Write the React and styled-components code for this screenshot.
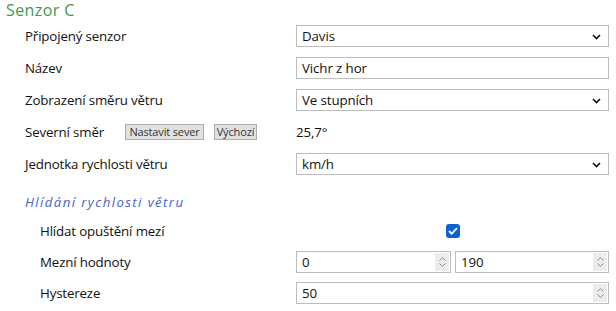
import React from "react";
import styled, { createGlobalStyle } from "styled-components";

const Global = createGlobalStyle`
  html, body { margin: 0; padding: 0; background: #fff; }
  body { font-family: "Open Sans", "Noto Sans", sans-serif; color: #111; }
`;

const Page = styled.div`
  width: 616px;
  height: 311px;
  overflow: hidden;
  box-sizing: border-box;
`;

const Title = styled.h2`
  margin: 0;
  height: 20px;
  padding-left: 6px;
  font-size: 16px;
  line-height: 20px;
  font-weight: 400;
  letter-spacing: 0.4px;
  color: #3f9a4f;
`;

const Row = styled.div`
  display: grid;
  grid-template-columns: ${(p) => (p.$sub ? 256 : 271)}px 313px;
  align-items: center;
  height: ${(p) => p.$h || 32}px;
  padding-left: ${(p) => (p.$sub ? 40 : 25)}px;
`;

const Label = styled.div`
  font-size: 13.3px;
  letter-spacing: -0.15px;
  display: flex;
  align-items: center;
`;

const LabelText = styled.span`
  width: 100px;
`;

const SmallButton = styled.button`
  font-family: inherit;
  font-size: 11px;
  letter-spacing: -0.15px;
  white-space: nowrap;
  height: 16px;
  width: ${(p) => p.$w}px;
  margin-right: 10px;
  padding: 0;
  line-height: 14px;
  background: #e1e1e1;
  border: 1px solid #adadad;
  color: #333;
  border-radius: 0;
`;

const Field = styled.div`
  position: relative;
  height: 22px;
  box-sizing: border-box;
  border: 1px solid #bdbdbd;
  background: #fff;
  display: flex;
  align-items: center;
  padding-left: 5px;
  font-size: 13.3px;
  letter-spacing: -0.1px;
`;

const Chevron = styled.svg`
  position: absolute;
  right: 7px;
  top: 8px;
`;

const Value = styled.div`
  font-size: 13.3px;
  letter-spacing: -0.1px;
`;

const Section = styled.div`
  height: 35px;
  display: flex;
  align-items: center;
  padding-left: 25px;
  padding-top: 8px;
  box-sizing: border-box;
  font-style: italic;
  font-size: 13.2px;
  letter-spacing: 1.4px;
  color: #4563c9;
`;

const CheckCell = styled.div`
  display: flex;
  justify-content: center;
  padding-left: 1px;
`;

const Check = styled.span`
  width: 14px;
  height: 14px;
  border-radius: 3px;
  background: #0b62d6;
  display: inline-flex;
  align-items: center;
  justify-content: center;
`;

const Pair = styled.div`
  display: grid;
  grid-template-columns: 155px 154px;
  gap: 4px;
`;

const Spinner = styled.div`
  position: absolute;
  right: 1px;
  top: 1px;
  bottom: 1px;
  width: 14px;
  background: #ececec;
  display: flex;
  flex-direction: column;
  align-items: center;
  justify-content: center;
  gap: 2px;
`;

const ChevronDown = () => (
  <Chevron width="9" height="6" viewBox="0 0 9 6">
    <path d="M1 1l3.5 3.5L8 1" fill="none" stroke="#111" strokeWidth="1.6" />
  </Chevron>
);

const Spin = () => (
  <Spinner>
    <svg width="7" height="4" viewBox="0 0 7 4">
      <path d="M0.5 3.5L3.5 0.7L6.5 3.5" fill="none" stroke="#8a8a8a" strokeWidth="1" />
    </svg>
    <svg width="7" height="4" viewBox="0 0 7 4">
      <path d="M0.5 0.5L3.5 3.3L6.5 0.5" fill="none" stroke="#8a8a8a" strokeWidth="1" />
    </svg>
  </Spinner>
);

const Select = ({ children }) => (
  <Field>
    {children}
    <ChevronDown />
  </Field>
);

const NumberField = ({ children }) => (
  <Field>
    {children}
    <Spin />
  </Field>
);

export default function App() {
  return (
    <Page>
      <Global />
      <Title>Senzor C</Title>
      <Row>
        <Label>Připojený senzor</Label>
        <Select>Davis</Select>
      </Row>
      <Row>
        <Label>Název</Label>
        <Field>Vichr z hor</Field>
      </Row>
      <Row>
        <Label>Zobrazení směru větru</Label>
        <Select>Ve stupních</Select>
      </Row>
      <Row>
        <Label>
          <LabelText>Severní směr</LabelText>
          <SmallButton $w={79}>Nastavit sever</SmallButton>
          <SmallButton $w={43}>Výchozí</SmallButton>
        </Label>
        <Value>25,7°</Value>
      </Row>
      <Row>
        <Label>Jednotka rychlosti větru</Label>
        <Select>km/h</Select>
      </Row>
      <Section>Hlídání rychlosti větru</Section>
      <Row $sub $h={32}>
        <Label>Hlídat opuštění mezí</Label>
        <CheckCell>
          <Check>
            <svg width="10" height="8" viewBox="0 0 10 8">
              <path d="M1 4l2.7 2.7L9 1.2" fill="none" stroke="#fff" strokeWidth="1.8" />
            </svg>
          </Check>
        </CheckCell>
      </Row>
      <Row $sub $h={29}>
        <Label>Mezní hodnoty</Label>
        <Pair>
          <NumberField>0</NumberField>
          <NumberField>190</NumberField>
        </Pair>
      </Row>
      <Row $sub $h={34}>
        <Label>Hystereze</Label>
        <NumberField>50</NumberField>
      </Row>
    </Page>
  );
}
